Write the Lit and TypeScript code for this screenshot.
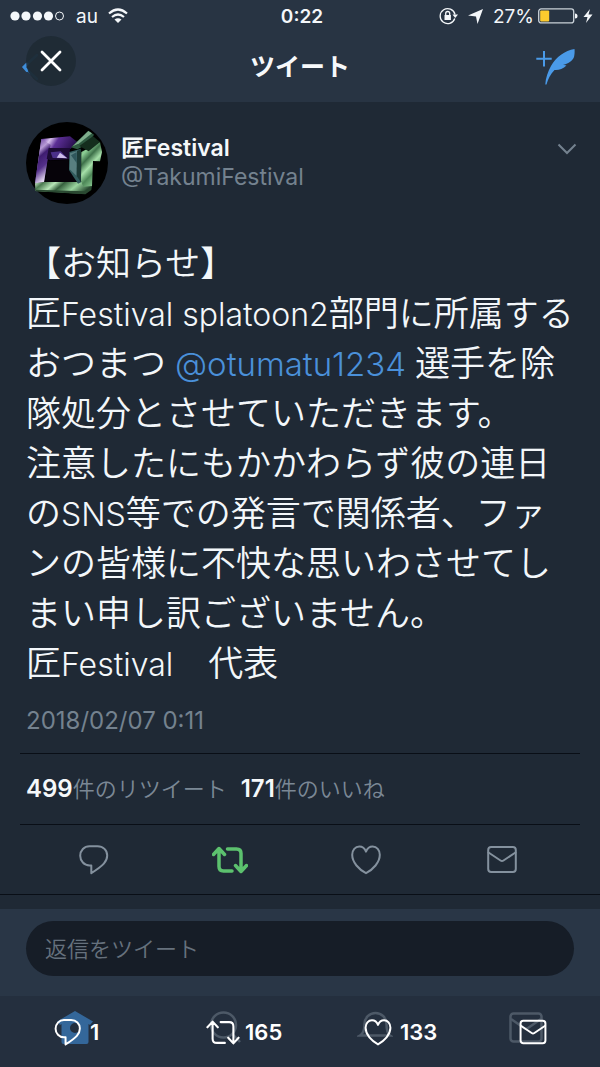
import { LitElement, html, svg, css } from "lit";
import { customElement } from "lit/decorators.js";

const replyPath = svg`<path d="M10.5 1.2H18.5C24.2 1.2 28.2 5.2 28.2 10.6C28.2 16.4 24.5 20.5 12.3 28.2V20.4H10.5C5.2 20.4 1.2 16 1.2 10.8C1.2 5.4 5.2 1.2 10.5 1.2Z"/>`;
const retweetPath = svg`<path d="M7 3V20.5Q7 25 11.500 25H20M1.500 8.500L7 2.500L12.500 8.500M15.500 3H24.500Q29 3 29 7.500V25M23.500 19.500L29 25.500L34.500 19.500"/>`;
const heartPath = svg`<path d="M15 28.200C8 24.500 1.200 17.500 1.200 9.800C1.200 5 4.300 1.500 8.300 1.500C11.500 1.500 13.800 3.500 15 6.600C16.200 3.500 18.500 1.500 21.700 1.500C25.700 1.500 28.800 5 28.800 9.800C28.800 17.500 22 24.500 15 28.200Z"/>`;
const mailPath = svg`<rect x="1.200" y="2" width="27.600" height="25" rx="3"/><path d="M1.500 7.500L13.500 15.500Q15 16.500 16.500 15.500L28.500 7.500"/>`;

const icon = (cls: string, viewBox: string, body: unknown) =>
  html`<svg class="icon ${cls}" viewBox=${viewBox} aria-hidden="true">${body}</svg>`;

@customElement("status-bar")
class StatusBar extends LitElement {
  static styles = css`
    :host {
      display: grid;
      grid-template-columns: 1fr auto 1fr;
      align-items: center;
      height: 32px;
      padding: 0 6px 0 10px;
      color: #f4f7fa;
      font-size: 19px;
    }
    .side { display: flex; align-items: center; }
    .right { justify-content: flex-end; gap: 4px; }
    .dots { width: 54px; height: 12px; margin-right: 12px; }
    .wifi { width: 20px; height: 16px; margin-left: 10px; }
    .time { font-weight: 600; }
    .lock { width: 19px; height: 18px; margin-right: 6px; }
    .arrow { width: 15px; height: 15px; margin-right: 6px; }
    .battery { width: 40px; height: 16px; }
    .bolt { width: 12px; height: 16px; }
  `;
  render() {
    return html`
      <div class="side">
        <svg class="dots" viewBox="0 0 54 12" fill="#f4f7fa">
          <circle cx="5" cy="6" r="4.600"/><circle cx="16" cy="6" r="4.600"/>
          <circle cx="27.500" cy="6" r="4.600"/><circle cx="38.500" cy="6" r="4.600"/>
          <circle cx="49.500" cy="6" r="4" fill="none" stroke="#f4f7fa"/>
        </svg>
        <span>au</span>
        <svg class="wifi" viewBox="0 0 20 16" fill="none" stroke="#f4f7fa" stroke-width="2.200">
          <path d="M1 5.500Q10 -2.500 19 5.500M4 9Q10 4 16 9"/>
          <path d="M6.500 11.500Q10 8.800 13.500 11.500L10 15Z" fill="#f4f7fa" stroke="none"/>
        </svg>
      </div>
      <span class="time">0:22</span>
      <div class="side right">
        <svg class="lock" viewBox="0 0 19 18" fill="none" stroke="#f4f7fa" stroke-width="1.300">
          <path d="M15.800 11.500A7.500 7.500 0 1 1 16 7.500"/>
          <path d="M13.500 7.500H19L16.200 11Z" fill="#f4f7fa" stroke="none"/>
          <rect x="5.500" y="8" width="6.400" height="5" fill="#f4f7fa" stroke="none"/>
          <path d="M6.700 8V6.500Q6.700 4.500 8.700 4.500T10.700 6.500V8"/>
        </svg>
        <svg class="arrow" viewBox="0 0 15 15" fill="#f4f7fa"><path d="M15 0L9.500 15L8 7.500L0 6.500Z"/></svg>
        <span>27%</span>
        <svg class="battery" viewBox="0 0 40 16">
          <rect x=".7" y=".9" width="35" height="14" rx="2.500" fill="none" stroke="#c9d1d8" stroke-width="1.300"/>
          <rect x="2.200" y="2.500" width="9" height="11" rx="1" fill="#fdcb2e"/>
          <path d="M37 5.500Q39.500 5.500 39.500 8T37 10.500Z" fill="#f4f7fa"/>
        </svg>
        <svg class="bolt" viewBox="0 0 10 16" fill="#f4f7fa"><path d="M7 1L.5 9H4.500L3 15L9.500 6.500H5.500Z"/></svg>
      </div>`;
  }
}

@customElement("nav-bar")
class NavBar extends LitElement {
  static styles = css`
    :host {
      display: grid;
      grid-template-columns: 1fr auto 1fr;
      align-items: center;
      height: 70px;
      padding: 0 22px;
      box-sizing: border-box;
      position: relative;
    }
    button { all: unset; display: block; cursor: pointer; }
    svg { display: block; }
    .chevron { width: 16px; height: 28px; }
    .title { margin: 0; font-size: 25px; line-height: 36px; font-weight: 700; color: #f7f9fb; }
    .compose { justify-self: end; }
    .feather { width: 42px; height: 38px; }
    .close {
      position: absolute; left: 26px; top: 4px;
      width: 50px; height: 50px; border-radius: 50%;
      background: rgba(30, 42, 51, .88);
    }
    .cross { width: 50px; height: 50px; }
  `;
  render() {
    return html`
      <button class="back" aria-label="戻る">
        <svg class="chevron" viewBox="0 0 16 28" fill="none" stroke-width="2.500" stroke-linecap="round">
          <path d="M15 2L2 14L15 26" stroke="#27527d"/><path d="M5 11L2 14L5 17.500" stroke="#3f8edb" stroke-width="3"/>
        </svg>
      </button>
      <h1 class="title">ツイート</h1>
      <button class="compose" aria-label="新しいツイート">
        <svg class="feather" viewBox="0 0 42 38">
          <path d="M8 3V18.500M.3 10.700H15.700" stroke="#4a9ae8" stroke-width="2"/>
          <path d="M38.500 1C29 2.500 20 9 15 18C12 23.500 9.500 30 9.300 36.500L10.500 36.500C12 31 14.500 26 18.500 22C22 22.500 27 21 30.500 17.500L27 16.800C32 16 36.500 13 38 9C38.600 6.500 38.800 3.500 38.500 1Z" fill="#4a9ae8"/>
        </svg>
      </button>
      <button class="close" aria-label="閉じる">
        <svg class="cross" viewBox="0 0 50 50" stroke="#fff" stroke-width="2.800" stroke-linecap="round"><path d="M16 16L34 34M34 16L16 34"/></svg>
      </button>`;
  }
}

@customElement("team-avatar")
class TeamAvatar extends LitElement {
  static styles = css`
    :host { display: block; width: 82px; height: 82px; }
    svg { display: block; width: 100%; height: 100%; }
  `;
  render() {
    return html`<svg viewBox="18 22 246 246" role="img" aria-label="匠Festival">
      <defs>
        <linearGradient id="p" x1="0" y1="0" x2="1" y2=".7">
          <stop offset="0" stop-color="#3b1c70"/><stop offset=".15" stop-color="#7246a8"/><stop offset=".27" stop-color="#d9c2ee"/>
          <stop offset=".4" stop-color="#5c2f96"/><stop offset=".7" stop-color="#2a1050"/><stop offset="1" stop-color="#6f4a94"/>
        </linearGradient>
        <linearGradient id="l" x1="0" y1="0" x2=".3" y2="1">
          <stop offset="0" stop-color="#5a3190"/><stop offset=".3" stop-color="#b79ad6"/><stop offset=".45" stop-color="#3e1c70"/>
          <stop offset=".7" stop-color="#54308a"/><stop offset="1" stop-color="#e3d8ee"/>
        </linearGradient>
        <linearGradient id="g" x1="0" y1="0" x2="1" y2=".25">
          <stop offset="0" stop-color="#d5f0d3"/><stop offset=".15" stop-color="#4b7a50"/><stop offset=".35" stop-color="#b7e6b7"/>
          <stop offset=".5" stop-color="#35603d"/><stop offset=".75" stop-color="#9bd6a0"/><stop offset="1" stop-color="#2d5236"/>
        </linearGradient>
        <linearGradient id="j" x1="0" y1="0" x2=".5" y2="1">
          <stop offset="0" stop-color="#3c6947"/><stop offset=".25" stop-color="#8ed096"/><stop offset=".42" stop-color="#3d7049"/>
          <stop offset=".6" stop-color="#a6e0a9"/><stop offset=".78" stop-color="#4d8757"/><stop offset="1" stop-color="#86c58d"/>
        </linearGradient>
      </defs>
      <circle cx="141" cy="145" r="123" fill="#000"/>
      <path d="M64 73L150 65L172 82L150 104L96 104L82 130L72 203L45 206Z" fill="url(#p)"/>
      <path d="M64 73L92 90L84 130L72 203L45 206Z" fill="url(#l)"/>
      <path d="M86 100L150 100L148 134L90 137L80 132Z" fill="#1c0b35"/>
      <path d="M92 113L122 110L142 131L98 130Z" fill="#4b2f8a"/><path d="M120 114L142 131L110 129Z" fill="#cdbdec"/>
      <path d="M84 139L146 135L148 166L170 203L76 201Z" fill="#060309"/>
      <path d="M45 206L72 202L198 202L216 214L196 238L46 229Z" fill="url(#g)"/>
      <path d="M46 225L194 230L216 212L214 226L196 239L48 230Z" fill="#2a4931"/>
      <path d="M184 112L240 82L246 112L240 140L219 139L216 214L190 216L183 200Z" fill="url(#j)"/>
      <path d="M153 98L205 48L222 60L204 88L172 104Z" fill="#2e5940"/>
      <path d="M158 95L205 49L216 56L178 86Z" fill="#7fae8c"/>
      <path d="M178 94L219 65L240 82L206 110Z" fill="#142d1d"/>
      <path d="M148 112L183 102L183 203L174 207L147 166Z" fill="#315b5d"/>
      <path d="M150 116L171 110L170 184L149 164Z" fill="#587f80"/><path d="M153 122L170 112L170 145Z" fill="#2f575c"/>
      <path d="M171 110L183 102L183 203L170 184Z" fill="#1c3a36"/>
    </svg>`;
  }
}

@customElement("tweet-detail")
class TweetDetail extends LitElement {
  static styles = css`
    :host { display: block; padding: 20px 0 0; border-bottom: 1px solid #090e16; }
    a { color: inherit; text-decoration: none; }
    button { all: unset; cursor: pointer; display: flex; }
    .author { display: flex; align-items: center; gap: 13px; padding: 0 23px 0 26px; }
    .names { flex: 1; font-size: 23px; line-height: 29px; }
    .name { font-weight: 600; color: #f5f8fa; }
    .handle { color: #74828f; }
    .more { align-self: flex-start; margin-top: 21px; }
    .caret { width: 20px; height: 12px; }
    .text {
      padding: 0 26px; margin: 34px 0 0;
      font-size: 35px; line-height: 50px; font-weight: 350; color: #f3f7fa;
    }
    .text p { margin: 0; }
    .latin { font-size: 32px; line-height: 32px; font-weight: 300; }
    .mention { font-size: 33px; color: #4a90d9; }
    .date { display: block; padding: 0 26px; margin-top: 17px; font-size: 24px; line-height: 32px; color: #74828f; }
    .counts {
      display: flex; align-items: center; gap: 14px; height: 70px;
      margin: 16px 20px 0; padding: 0 6px;
      border-top: 1px solid #090e16; border-bottom: 1px solid #090e16;
      font-size: 22px; line-height: 32px; color: #7b8895; font-weight: 350;
    }
    .counts strong { font-size: 24px; font-weight: 600; color: #f5f8fa; }
    .actions { display: grid; grid-template-columns: repeat(4, 1fr); align-items: center; justify-items: center; height: 69px; padding: 0 30px 0 26px; }
    .icon { width: 30px; height: 30px; fill: none; stroke: #84919e; stroke-width: 2; stroke-linejoin: round; stroke-linecap: round; }
    .retweeted { width: 36px; height: 28px; stroke: #5cc16e; stroke-width: 3.500; }
  `;
  render() {
    return html`
      <div class="author">
        <team-avatar></team-avatar>
        <div class="names">
          <div class="name">匠Festival</div>
          <div class="handle">@TakumiFestival</div>
        </div>
        <button class="more" aria-label="その他">
          <svg class="caret" viewBox="0 0 20 12" fill="none" stroke="#74828f" stroke-width="2"><path d="M1.500 1.500L10 10L18.500 1.500"/></svg>
        </button>
      </div>
      <div class="text" lang="ja">
        <p>【お知らせ】</p>
        <p>匠<span class="latin">Festival splatoon2</span>部門に所属するおつまつ<span class="latin"> <a class="mention" href="#otumatu1234">@otumatu1234</a> </span>選手を除隊処分とさせていただきます。</p>
        <p>注意したにもかかわらず彼の連日の<span class="latin">SNS</span>等での発言で関係者、ファンの皆様に不快な思いわさせてしまい申し訳ございません。</p>
        <p>匠<span class="latin">Festival</span>　代表</p>
      </div>
      <time class="date" datetime="2018-02-07T00:11">2018/02/07 0:11</time>
      <div class="counts">
        <a href="#retweets"><strong>499</strong>件のリツイート</a>
        <a href="#likes"><strong>171</strong>件のいいね</a>
      </div>
      <div class="actions">
        <button aria-label="返信">${icon("", "0 0 30 30", replyPath)}</button>
        <button aria-label="リツイート">${icon("retweeted", "0 0 36 28", retweetPath)}</button>
        <button aria-label="いいね">${icon("", "0 0 30 30", heartPath)}</button>
        <button aria-label="メッセージで共有">${icon("", "0 0 30 30", mailPath)}</button>
      </div>`;
  }
}

@customElement("tab-dock")
class TabDock extends LitElement {
  static styles = css`
    :host { display: block; position: relative; background: #242f3e; height: 71px; }
    button { all: unset; cursor: pointer; display: flex; align-items: center; }
    .tabs { display: grid; grid-template-columns: repeat(4, 1fr); justify-items: center; padding-top: 14px; }
    .tab { width: 36px; height: 36px; fill: none; stroke: #4d5967; stroke-width: 2.500; }
    .home { fill: #34679a; stroke: none; }
    .overlay {
      position: absolute; inset: 0;
      display: grid; grid-template-columns: repeat(3, 1fr) 34px; align-items: center;
      padding: 1px 50px 0 51px;
      font-size: 22px; font-weight: 600; color: #fff;
    }
    .overlay button { gap: 5px; }
    .icon { width: 34px; height: 27px; fill: none; stroke: #fff; stroke-width: 2.200; stroke-linejoin: round; stroke-linecap: round; }
  `;
  render() {
    return html`
      <nav class="tabs">
        <button aria-label="ホーム"><svg class="tab home" viewBox="0 0 36 36"><path fill-rule="evenodd" d="M18 1L36 11.500L33 15L31.500 14V32Q31.500 34 29.500 34H6.500Q4.500 34 4.500 32V14L3 15L0 11.500ZM18 13A5 5 0 1 0 18 23A5 5 0 1 0 18 13Z"/></svg></button>
        <button aria-label="検索"><svg class="tab" viewBox="0 0 36 36"><circle cx="16.500" cy="15" r="12.500"/><path d="M25.500 24L33 32"/></svg></button>
        <button aria-label="通知"><svg class="tab" viewBox="0 0 36 36"><path d="M3 25.500Q7.500 23 7.500 14A11 11 0 0 1 29.500 14Q29.500 23 33 25.500Z"/></svg></button>
        <button aria-label="メッセージ"><svg class="tab" viewBox="0 0 36 36"><rect x="3.500" y="3.500" width="31" height="28" rx="3"/><path d="M4 9L17 18Q19 19.500 21 18L34 9"/></svg></button>
      </nav>
      <div class="overlay">
        <button aria-label="返信 1">${icon("", "0 0 30 30", replyPath)}<span>1</span></button>
        <button aria-label="リツイート 165">${icon("", "0 0 36 28", retweetPath)}<span>165</span></button>
        <button aria-label="いいね 133">${icon("", "0 0 30 30", heartPath)}<span>133</span></button>
        <button aria-label="共有">${icon("", "0 0 30 30", mailPath)}</button>
      </div>`;
  }
}

@customElement("app-root")
class AppRoot extends LitElement {
  static styles = css`
    :host {
      display: flex; flex-direction: column; min-height: 100vh;
      background: #1f2935;
      font-family: Inter, "Noto Sans CJK JP", sans-serif;
    }
    .top { background: #283443; }
    .reply { margin-top: auto; background: #293646; padding: 12px 26px 20px; }
    .field {
      display: block; width: 100%; height: 55px; box-sizing: border-box;
      border: 0; border-radius: 28px; background: #161d27; padding: 0 19px;
      font-family: inherit; font-size: 22px; font-weight: 350; color: #f5f8fa; outline: 0;
    }
    .field::placeholder { color: #66717d; opacity: 1; }
  `;
  render() {
    return html`
      <header class="top"><status-bar></status-bar><nav-bar></nav-bar></header>
      <main><tweet-detail></tweet-detail></main>
      <form class="reply"><input class="field" type="text" aria-label="返信をツイート" placeholder="返信をツイート"></form>
      <tab-dock></tab-dock>`;
  }
}
